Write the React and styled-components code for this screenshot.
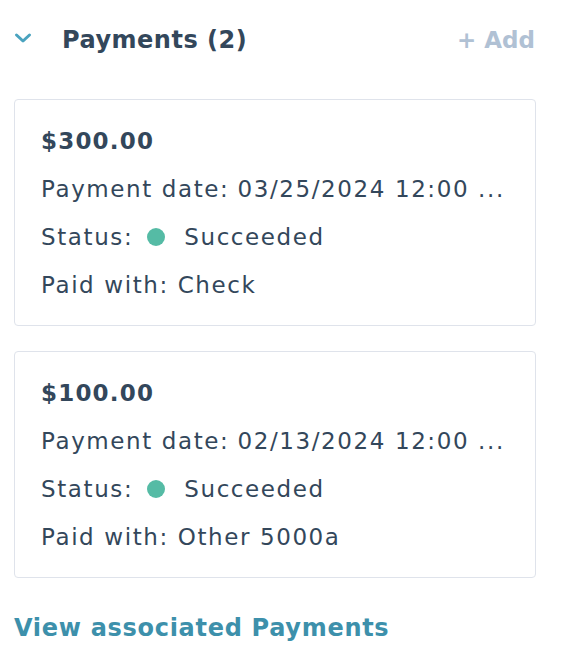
import React from "react";
import styled, { createGlobalStyle } from "styled-components";

const Global = createGlobalStyle`
  html, body { margin: 0; padding: 0; background: #ffffff; }
  body { font-family: "DejaVu Sans", "Open Sans", sans-serif; color: #33475b; }
`;

const Panel = styled.div`
  width: 522px;
  padding: 16px 0 0 14px;
  display: flex;
  flex-direction: column;
`;

const Header = styled.div`
  display: flex;
  align-items: center;
  height: 48px;
`;

const Toggle = styled.span`
  width: 48px;
  display: flex;
  align-items: center;
  color: #4aa3bf;
  margin-top: -4px;
`;

const Title = styled.h2`
  margin: 0;
  flex: 1;
  font-size: 24px;
  letter-spacing: 0.5px;
  font-weight: 700;
  color: #33475b;
`;

const AddButton = styled.span`
  font-size: 23px;
  font-weight: 700;
  color: #b0c1d4;
  margin-right: 1px;
`;

const List = styled.div`
  display: flex;
  flex-direction: column;
  gap: 25px;
  margin-top: 35px;
`;

const Card = styled.div`
  border: 1px solid #dfe3eb;
  border-radius: 4px;
  padding: 17px 26px 16px;
  display: flex;
  flex-direction: column;
`;

const Line = styled.div`
  height: 48px;
  line-height: 48px;
  font-size: 23px;
  letter-spacing: ${(p) => (p.$bold ? "1.2px" : "1.6px")};
  font-weight: ${(p) => (p.$bold ? 700 : 400)};
  white-space: nowrap;
  display: flex;
  align-items: center;
`;

const Gap = styled.span`
  display: inline-block;
  width: ${(p) => p.$w}px;
`;

const Dot = styled.span`
  width: 18px;
  height: 18px;
  border-radius: 50%;
  background: #55bba5;
  margin: 0 19px 0 14px;
`;

const ViewLink = styled.a`
  margin-top: 34px;
  font-size: 24px;
  letter-spacing: 0.7px;
  font-weight: 700;
  color: #3d90ab;
  text-decoration: none;
  line-height: 32px;
`;

const payments = [
  { amount: "$300.00", date: "03/25/2024 12:00 ...", method: "Check" },
  { amount: "$100.00", date: "02/13/2024 12:00 ...", method: "Other 5000a" },
];

export default function App() {
  return (
    <>
      <Global />
      <Panel>
        <Header>
          <Toggle>
            <svg width="18" height="12" viewBox="0 0 18 12" fill="none">
              <path d="M2.5 3 L9 9 L15.5 3" stroke="currentColor" strokeWidth="3" strokeLinecap="round" strokeLinejoin="round" />
            </svg>
          </Toggle>
          <Title>Payments (2)</Title>
          <AddButton>+ Add</AddButton>
        </Header>
        <List>
          {payments.map((p) => (
            <Card key={p.amount}>
              <Line $bold>{p.amount}</Line>
              <Line>
                Payment date:<Gap $w={8} />{p.date}
              </Line>
              <Line>
                Status:<Dot />Succeeded
              </Line>
              <Line>Paid with: {p.method}</Line>
            </Card>
          ))}
        </List>
        <ViewLink href="#">View associated Payments</ViewLink>
      </Panel>
    </>
  );
}
